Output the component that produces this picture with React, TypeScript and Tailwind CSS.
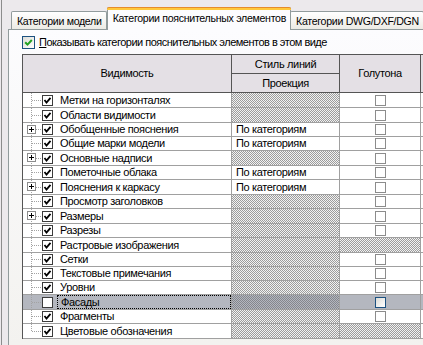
import React from 'react';

type Row = {
  name: string;
  plus?: boolean;
  checked: boolean;
  style: string | null;
  c3: 'box' | 'hatch';
  h: 14 | 15;
  selected?: boolean;
};

const rows: Row[] = [
  { name: 'Метки на горизонталях', checked: true, style: null, c3: 'box', h: 15 },
  { name: 'Области видимости', checked: true, style: null, c3: 'box', h: 15 },
  { name: 'Обобщенные пояснения', plus: true, checked: true, style: 'По категориям', c3: 'box', h: 14 },
  { name: 'Общие марки модели', checked: true, style: 'По категориям', c3: 'box', h: 14 },
  { name: 'Основные надписи', plus: true, checked: true, style: null, c3: 'box', h: 15 },
  { name: 'Пометочные облака', checked: true, style: 'По категориям', c3: 'box', h: 14 },
  { name: 'Пояснения к каркасу', plus: true, checked: true, style: 'По категориям', c3: 'box', h: 15 },
  { name: 'Просмотр заголовков', checked: true, style: null, c3: 'box', h: 14 },
  { name: 'Размеры', plus: true, checked: true, style: null, c3: 'box', h: 15 },
  { name: 'Разрезы', checked: true, style: null, c3: 'box', h: 14 },
  { name: 'Растровые изображения', checked: true, style: null, c3: 'hatch', h: 15 },
  { name: 'Сетки', checked: true, style: null, c3: 'box', h: 14 },
  { name: 'Текстовые примечания', checked: true, style: null, c3: 'box', h: 14 },
  { name: 'Уровни', checked: true, style: null, c3: 'box', h: 14 },
  { name: 'Фасады', checked: false, style: null, c3: 'box', h: 15, selected: true },
  { name: 'Фрагменты', checked: true, style: null, c3: 'box', h: 14 },
  { name: 'Цветовые обозначения', checked: true, style: null, c3: 'hatch', h: 15 },
];

const hatch =
  'bg-[image:repeating-conic-gradient(#9c9c9c_0_25%,#f2f2f2_0_50%)] bg-[length:2px_2px]';
const hatchSel =
  'bg-[image:repeating-conic-gradient(#84868c_0_25%,#b4b7bf_0_50%)] bg-[length:2px_2px]';

function Tree({ plus, last }: { plus?: boolean; last?: boolean }) {
  return (
    <svg width="19" height="100%" className="shrink-0 h-full" shapeRendering="crispEdges">
      <line x1="8.5" y1="0" x2="8.5" y2={last ? '50%' : '100%'} stroke="#a3a3a3" strokeDasharray="1 1" />
      <line x1="9" y1="50%" x2="18" y2="50%" stroke="#a3a3a3" strokeDasharray="1 1" />
      {plus && (
        <svg x="4" y="50%" overflow="visible">
          <rect x="0.5" y="-4.5" width="8" height="8" fill="#fff" stroke="#8c8c8c" />
          <line x1="2" y1="-0.5" x2="7" y2="-0.5" stroke="#000" />
          <line x1="4.5" y1="-3" x2="4.5" y2="2" stroke="#000" />
        </svg>
      )}
    </svg>
  );
}

function RowCheck({ checked }: { checked: boolean }) {
  return (
    <div className="w-[11px] h-[11px] shrink-0 border border-[#3c3c3c] bg-white flex items-center justify-center">
      {checked && (
        <svg width="9" height="9" viewBox="0 0 9 9">
          <path d="M1.5 4 L3.5 6.5 L7.5 1.8" fill="none" stroke="#000" strokeWidth="1.8" />
        </svg>
      )}
    </div>
  );
}

function Tab({ label, active }: { label: string; active?: boolean }) {
  if (active) {
    return (
      <div className="relative h-[23px] pl-[5px] pr-[4px] pt-[5px] bg-[#fcfcfe] border-l border-r border-[#919b9c] -mb-px z-10 rounded-t-[2px]">
        <div className="absolute left-[-1px] right-[-1px] top-0 h-[3px] bg-[#ffc83c] border-t border-[#e68b2c] rounded-t-[2px]" />
        <span className="whitespace-nowrap">{label}</span>
      </div>
    );
  }
  return (
    <div className="h-[18px] pl-[5px] pr-[4px] pt-[3px] border-t border-l border-r border-[#919b9c] bg-gradient-to-b from-white to-[#ecebe5] rounded-t-[2px] whitespace-nowrap">
      {label}
    </div>
  );
}

export default function App() {
  return (
    <div className="w-[423px] h-[345px] overflow-hidden bg-[#ece9ec] pl-px font-['Liberation_Sans',Arial,sans-serif] text-[11px] leading-[13px] tracking-[-0.35px] text-black">
      <div className="h-full border-l border-[#8c8c8c] pl-[6px] flex flex-col">
        {/* tab strip */}
        <div className="h-[29px] flex items-end pl-[3px] shrink-0 text-[10.6px] tracking-[-0.3px]">
          <Tab label="Категории модели" />
          <Tab label="Категории пояснительных элементов" active />
          <div className="-ml-px">
            <Tab label="Категории DWG/DXF/DGN" />
          </div>
        </div>
        {/* panel */}
        <div className="flex-1 border-l border-t border-[#919b9c] bg-gradient-to-b from-[#fcfcfe] to-[#f3f2ef] pl-[13px] pt-[6px]">
          <div className="flex items-center h-[13px]">
            <div className="w-[13px] h-[13px] shrink-0 border border-[#1c5180] bg-gradient-to-br from-[#dcdcd7] to-white flex items-center justify-center">
              <svg width="9" height="9" viewBox="0 0 9 9">
                <path d="M1.2 4.2 L3.5 6.6 L7.8 2" fill="none" stroke="#21a121" strokeWidth="2" />
              </svg>
            </div>
            <span className="ml-[4px] whitespace-nowrap tracking-[-0.5px]">
              <span className="underline">П</span>оказывать категории пояснительных элементов в этом виде
            </span>
          </div>

          {/* grid */}
          <div className="mt-[5px] w-[420px] border-l border-t border-[#555] bg-white">
            {/* header */}
            <div className="flex bg-[#e4e0e5] h-[38px] border-b border-[#555]">
              <div className="w-[209px] shrink-0 border-r border-[#555] flex items-center justify-center">Видимость</div>
              <div className="w-[108px] shrink-0 border-r border-[#555] flex flex-col">
                <div className="h-[19px] border-b border-[#555] flex items-center justify-center">Стиль линий</div>
                <div className="flex-1 flex items-center justify-center">Проекция</div>
              </div>
              <div className="w-[81px] shrink-0 border-r border-[#555] flex items-center justify-center">Голутона</div>
            </div>
            {/* rows */}
            {rows.map((r, i) => {
              const last = i === rows.length - 1;
              const sel = !!r.selected;
              return (
                <div
                  key={r.name}
                  className={`flex border-b border-[#a0a0a0] ${r.h === 15 ? 'h-[15px]' : 'h-[14px]'} ${sel ? 'bg-[#b4b7bf]' : 'bg-white'}`}
                >
                  <div className="w-[209px] shrink-0 border-r border-[#a0a0a0] flex items-center">
                    <Tree plus={r.plus} last={last} />
                    <RowCheck checked={r.checked} />
                    <div className={`ml-[4px] pl-[3px] h-full flex-1 flex items-center whitespace-nowrap ${sel ? 'border border-dotted border-black' : ''}`}>
                      {r.name}
                    </div>
                  </div>
                  <div
                    className={`w-[108px] shrink-0 border-r border-[#a0a0a0] flex items-center pl-[4px] whitespace-nowrap ${
                      r.style ? '' : sel ? hatchSel : hatch
                    }`}
                  >
                    {r.style}
                  </div>
                  <div
                    className={`w-[81px] shrink-0 border-r border-[#a0a0a0] flex items-center pl-[35px] ${
                      r.c3 === 'hatch' ? hatch : ''
                    }`}
                  >
                    {r.c3 === 'box' &&
                      (sel ? (
                        <div className="w-[11px] h-[11px] border border-[#1c5180] bg-gradient-to-br from-[#dcdcd7] to-white" />
                      ) : (
                        <div className="w-[11px] h-[11px] border border-[#8c8c8c] bg-white" />
                      ))}
                  </div>
                </div>
              );
            })}
          </div>
        </div>
      </div>
    </div>
  );
}
